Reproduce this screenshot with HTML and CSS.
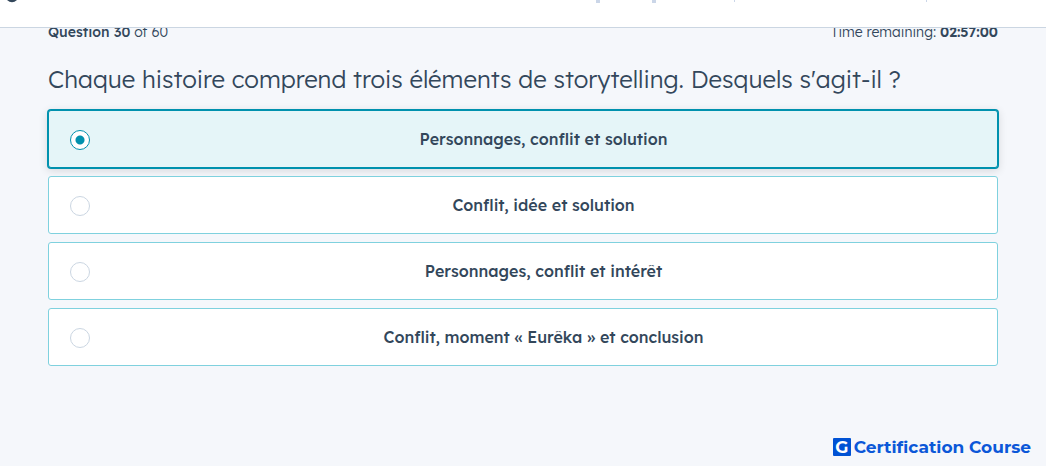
FILE: index.html
```
<!DOCTYPE html>
<html lang="fr">

<head>
    <meta charset="UTF-8">
    <meta name="viewport" content="width=device-width, initial-scale=1">
    <title>Certification - Question 30</title>
    <link rel="stylesheet" href="styles.css">
</head>

<body>
    <header class="topbar">
        <svg class="topbar-logo" width="10" height="3" viewBox="0 0 10 3">
            <path d="M0 0 Q5 4.500 10 0 Z" fill="#33475b" />
        </svg>
        <div class="topbar-nav">
            <span class="mark"></span>
            <span class="mark"></span>
            <span class="divider"></span>
            <span class="divider"></span>
        </div>
    </header>

    <main class="quiz">
        <div class="status">
            <span><b>Question 30</b> of 60</span>
            <span>Time remaining: <b class="time">02:57:00</b></span>
        </div>

        <form>
            <fieldset class="answers">
                <legend class="question">Chaque histoire comprend trois éléments de storytelling. Desquels s'agit-il ?</legend>
                <label class="answer">
                    <input type="radio" name="reponse" value="1" checked>
                    <span>Personnages, conflit et solution</span>
                </label>
                <label class="answer">
                    <input type="radio" name="reponse" value="2">
                    <span>Conflit, idée et solution</span>
                </label>
                <label class="answer">
                    <input type="radio" name="reponse" value="3">
                    <span>Personnages, conflit et intérêt</span>
                </label>
                <label class="answer">
                    <input type="radio" name="reponse" value="4">
                    <span>Conflit, moment « Eurêka » et conclusion</span>
                </label>
            </fieldset>
        </form>
    </main>

    <footer class="brand">
        <span class="brand-icon">G</span>
        <span>Certification Course</span>
    </footer>
</body>

</html>
```
FILE: styles.css
```
* {
    box-sizing: border-box;
}

body {
    margin: 0;
    min-height: 100vh;
    display: flex;
    flex-direction: column;
    font-family: Lexend, Inter, sans-serif;
    font-size: 16px;
    color: #33475b;
    background-color: #f5f7fb;
}

/* top bar, the page scrolls under it */
.topbar {
    position: sticky;
    top: 0;
    z-index: 1;
    display: flex;
    justify-content: space-between;
    height: 28px;
    padding: 0 119px 0 7px;
    background-color: #fff;
    border-bottom: 1px solid #cbd6e2;
}

.topbar-nav {
    display: flex;
}

.mark {
    width: 4px;
    height: 3px;
    margin-right: 52px;
    background-color: #cbd6e8;
}

.mark + .divider {
    margin: 0 191px 0 26px;
}

.divider {
    width: 1px;
    height: 2px;
    background-color: #cbd6e8;
}

.quiz {
    padding: 0 48px;
}

.status {
    display: flex;
    justify-content: space-between;
    margin-top: -6px;
    font-size: 14px;
    line-height: 20px;
    font-weight: 300;
}

.status b {
    font-weight: 500;
}

.status .time {
    font-weight: 600;
}

.answers {
    display: flex;
    flex-direction: column;
    gap: 8px;
    margin: 0;
    padding: 0;
    border: none;
    min-width: 0;
}

.question {
    padding: 21px 0 15px;
    font-size: 24px;
    line-height: 32px;
    font-weight: 300;
}

.answer {
    display: flex;
    align-items: center;
    gap: 21px;
    min-height: 58px;
    padding: 9px 21px 8px;
    background-color: #fff;
    border: 1px solid #7fd1de;
    border-radius: 3px;
    font-weight: 500;
    line-height: 21px;
    text-align: center;
    cursor: pointer;
}

.answer span {
    flex: 1;
}

.answer:has(input:checked) {
    background-color: #e5f5f8;
    border-color: #0091ae;
    box-shadow: 0 0 0 1px #0091ae, 0 2px 8px 1px rgba(0, 0, 0, 0.12);
}

.answer input {
    appearance: none;
    flex: none;
    width: 20px;
    height: 20px;
    margin: 0;
    background-color: #fff;
    border: 1px solid #cbd6e2;
    border-radius: 50%;
}

.answer input:checked {
    border-color: #0091ae;
    background-image: radial-gradient(circle, #0091ae 4px, #fff 5px);
}

.brand {
    display: flex;
    justify-content: flex-end;
    align-items: center;
    gap: 3px;
    margin-top: auto;
    padding: 0 15px 9px 0;
    color: #0b57d8;
    font-family: Montserrat, Lexend, Inter, sans-serif;
    font-size: 17px;
    line-height: 20px;
    font-weight: 700;
}

.brand-icon {
    width: 18px;
    height: 18px;
    background-color: #0052d4;
    border-radius: 1px;
    color: #fff;
    line-height: 18px;
    text-align: center;
}
```
